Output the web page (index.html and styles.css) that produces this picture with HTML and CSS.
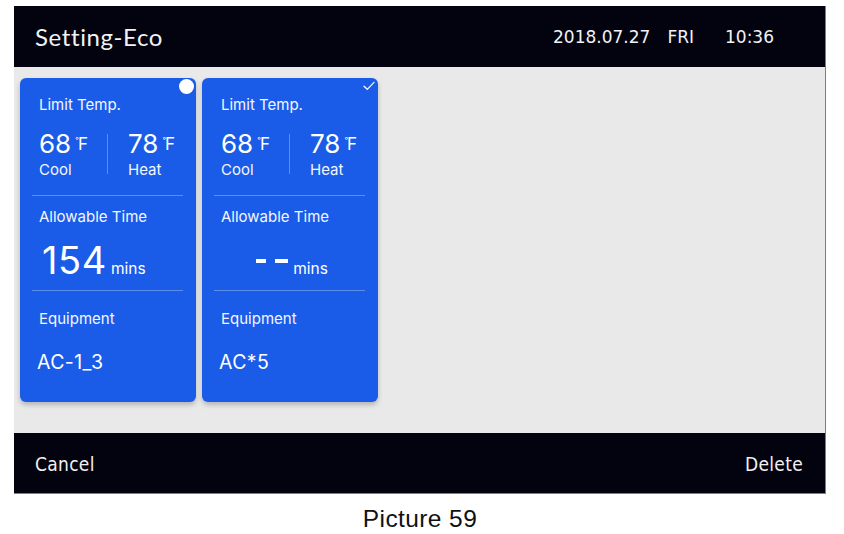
FILE: index.html
```html
<!DOCTYPE html>
<html>
<head>
<meta charset="utf-8">
<link rel="stylesheet" href="styles.css">
</head>
<body>
<div class="device">
  <header class="topbar">
    <div class="title">Setting-Eco</div>
    <div class="clock"><span class="date">2018.07.27</span><span class="day">FRI</span><span class="time">10:36</span></div>
  </header>
  <main class="content">
    <section class="card">
      <span class="badge-dot"></span>
      <div class="block block-temp">
        <div class="label">Limit Temp.</div>
        <div class="temps">
          <div class="temp temp-cool">
            <div class="num">68<span class="unit"><span class="deg">°</span>F</span></div>
            <div class="sub">Cool</div>
          </div>
          <div class="vline"></div>
          <div class="temp temp-heat">
            <div class="num">78<span class="unit"><span class="deg">°</span>F</span></div>
            <div class="sub">Heat</div>
          </div>
        </div>
      </div>
      <div class="block block-time">
        <div class="label">Allowable Time</div>
        <div class="time-val"><span class="big">154</span><span class="mins">mins</span></div>
      </div>
      <div class="block block-equip">
        <div class="label">Equipment</div>
        <div class="equip">AC-1_3</div>
      </div>
    </section>
    <section class="card">
      <svg class="badge-check" width="12" height="10" viewBox="0 0 12 10"><path d="M1 5.2 L4.3 8.3 L11 1.3" fill="none" stroke="#fff" stroke-width="1.2" stroke-linecap="round" stroke-linejoin="round"/></svg>
      <div class="block block-temp">
        <div class="label">Limit Temp.</div>
        <div class="temps">
          <div class="temp temp-cool">
            <div class="num">68<span class="unit"><span class="deg">°</span>F</span></div>
            <div class="sub">Cool</div>
          </div>
          <div class="vline"></div>
          <div class="temp temp-heat">
            <div class="num">78<span class="unit"><span class="deg">°</span>F</span></div>
            <div class="sub">Heat</div>
          </div>
        </div>
      </div>
      <div class="block block-time">
        <div class="label">Allowable Time</div>
        <div class="time-val time-val-center"><span class="dashes"><span class="dash dash-a"></span><span class="dash dash-b"></span></span><span class="mins">mins</span></div>
      </div>
      <div class="block block-equip">
        <div class="label">Equipment</div>
        <div class="equip">AC*5</div>
      </div>
    </section>
  </main>
  <footer class="bottombar">
    <div class="btn">Cancel</div>
    <div class="btn">Delete</div>
  </footer>
</div>
<div class="caption">Picture 59</div>
</body>
</html>
```
FILE: styles.css
```css
* { box-sizing: border-box; }
html, body { margin: 0; padding: 0; background: #ffffff; }
body { font-family: "Inter", "Lato", sans-serif; }

.device {
  margin: 6px 0 0 14px;
  width: 812px;
  border-right: 1px solid #3d8ed3;
  border-bottom: 1px solid #3d8ed3;
}

.topbar {
  height: 61px;
  background: #03030f;
  color: #f2f2f2;
  display: flex;
  align-items: center;
  justify-content: space-between;
  padding: 0 51px 0 21px;
}
.title {
  font-family: "Lato", sans-serif;
  font-size: 24px;
  letter-spacing: 0.6px;
  padding-bottom: 1px;
}
.clock {
  font-family: "DejaVu Sans", sans-serif;
  font-size: 17px;
  display: flex;
}
.day { margin-left: 17px; }
.time { margin-left: 31px; }

.content {
  height: 366px;
  background: #e9e9e9;
  display: flex;
  align-items: flex-start;
  gap: 6px;
  padding: 11px 6px;
}

.card {
  position: relative;
  width: 176px;
  height: 324px;
  background: #1a5ce7;
  border-radius: 6px;
  color: #ffffff;
  padding: 0 13px 0 12px;
  box-shadow: 0 3px 5px rgba(0,0,0,0.22);
}
.badge-dot {
  position: absolute;
  top: 1px;
  right: 2px;
  width: 15px;
  height: 15px;
  border-radius: 50%;
  background: #ffffff;
}
.badge-check {
  position: absolute;
  top: 3px;
  right: 3px;
}

.block { border-bottom: 1px solid rgba(255,255,255,0.3); }
.block-equip { border-bottom: none; }
.label {
  font-size: 15px;
  line-height: 18px;
  padding-left: 7px;
  color: #f4f6ff;
}
.block-temp { height: 118px; padding-top: 18px; }
.temps {
  display: flex;
  align-items: center;
  margin-top: 15px;
  padding-left: 7px;
}
.temp-cool { width: 68px; }
.temp-heat { padding-left: 20px; }
.num {
  font-size: 26px;
  line-height: 30px;
  display: flex;
  align-items: flex-start;
}
.unit {
  font-size: 17px;
  line-height: 30px;
  margin-left: 4px;
  display: flex;
  align-items: flex-start;
}
.deg {
  font-size: 8px;
  line-height: 22px;
  margin-right: -1px;
}
.sub {
  font-size: 15px;
  line-height: 18px;
  margin-top: 2px;
  color: #f4f6ff;
}
.vline {
  width: 1px;
  height: 40px;
  background: rgba(255,255,255,0.3);
}

.block-time { height: 95px; padding-top: 12px; }
.time-val {
  margin-top: 14px;
  height: 40px;
  display: flex;
  align-items: baseline;
  padding-left: 10px;
}
.time-val-center {
  align-items: flex-end;
  justify-content: center;
  padding-left: 5px;
}
.big {
  font-size: 38px;
  line-height: 40px;
  letter-spacing: 0.6px;
}
.mins {
  font-size: 15.5px;
  margin-left: 4px;
}
.time-val-center .mins {
  margin-left: 5px;
  margin-bottom: 2px;
}
.dashes {
  display: flex;
  align-items: center;
  gap: 9px;
  height: 40px;
  padding-top: 2px;
}
.dash {
  height: 4px;
  background: #ffffff;
}
.dash-a { width: 10px; }
.dash-b { width: 13px; }

.block-equip { padding-top: 19px; }
.equip {
  margin-top: 23px;
  font-size: 19.5px;
  line-height: 22px;
  letter-spacing: 0.4px;
  padding-left: 5px;
}

.bottombar {
  height: 60px;
  background: #03030f;
  color: #f0f0f0;
  display: flex;
  align-items: center;
  justify-content: space-between;
  padding: 2px 22px 0 21px;
  font-family: "DejaVu Sans Condensed", "DejaVu Sans", sans-serif;
  font-stretch: condensed;
  font-size: 19px;
  letter-spacing: 0.3px;
}

.caption {
  text-align: center;
  font-family: "Liberation Sans", Arial, sans-serif;
  font-size: 24.5px;
  letter-spacing: 0.4px;
  color: #111;
  margin-top: 11px;
  padding-right: 4px;
}
```
